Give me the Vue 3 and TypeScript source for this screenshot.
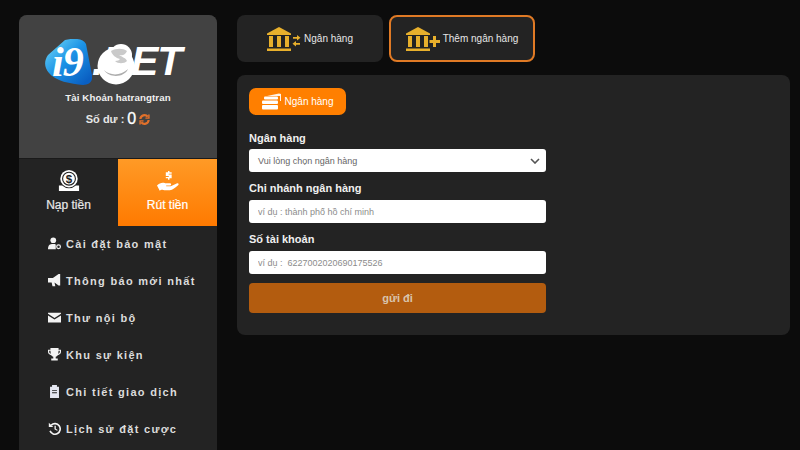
<script setup lang="ts">
const menu = [
  { label: 'Cài đặt bảo mật', icon: 'user' },
  { label: 'Thông báo mới nhất', icon: 'horn' },
  { label: 'Thư nội bộ', icon: 'mail' },
  { label: 'Khu sự kiện', icon: 'cup' },
  { label: 'Chi tiết giao dịch', icon: 'clip' },
  { label: 'Lịch sử đặt cược', icon: 'hist' },
]
</script>

<template>
  <div class="page">
    <aside class="side">
      <div class="profile">
        <div class="logo">
          <div class="badge">
            <svg viewBox="0 0 47 46" width="47" height="46">
              <defs>
                <linearGradient id="bg" x1="0.1" y1="0.1" x2="0.9" y2="0.9">
                  <stop offset="0" stop-color="#63cdf5" />
                  <stop offset="0.45" stop-color="#1c93e6" />
                  <stop offset="1" stop-color="#0a5fc2" />
                </linearGradient>
              </defs>
              <path d="M20 1C28-1 38-1 41 5L47 36C48 43 44 46 38 46C26 45 10 42 4 34C-1 28-1 22 3 16Z" fill="url(#bg)" />
            </svg>
            <span>i9</span>
          </div>
          <span class="word">.BET</span>
          <svg class="blob" viewBox="0 0 40 42" width="40" height="42">
            <circle cx="19" cy="23" r="18.500" fill="#fff" />
            <circle cx="24" cy="12" r="11" fill="#fff" />
            <path d="M14 8c5-3 12-3 16 0-2 4-4 5-8 4 3 2 7 3 8 6-3 3-9 3-12 0 3 0 4-1 5-2-4-1-8-4-9-8z" fill="#8a8a8a" opacity=".45" />
            <path d="M7 27c6 6 17 6 24-1-3 8-18 10-24 1z" fill="#6a6a6a" opacity=".55" />
          </svg>
        </div>
        <div class="acct">Tài Khoản hatrangtran</div>
        <div class="bal">
          Số dư : <b>0</b>
          <svg viewBox="0 0 12 12" width="11" height="11" fill="none" stroke="#e2702a" stroke-width="2.400">
            <path d="M1.500 5.500a4.500 4.500 0 0 1 8-2.500M10.500 6.500a4.500 4.500 0 0 1-8 2.500" />
            <path d="M10.800 .5v4H7M1.200 11.500v-4H5" stroke-width="1.600" />
          </svg>
        </div>
      </div>
      <div class="actions">
        <div class="act">
          <svg viewBox="0 0 24 24" width="22" height="22">
            <circle cx="12" cy="9.500" r="9.500" fill="#fff" />
            <circle cx="12" cy="9.500" r="7" fill="none" stroke="#232323" stroke-width="1.200" />
            <text x="12" y="14" text-anchor="middle" font-size="12.500" font-weight="700" font-family="Liberation Sans" fill="#232323">$</text>
            <path d="M1 17h3.500a11 11 0 0 0 15 0H23v6H1z" fill="#fff" />
          </svg>
          <span>Nạp tiền</span>
        </div>
        <div class="act on">
          <svg viewBox="0 0 26 24" width="24" height="22" fill="#fff">
            <path d="M1 17c3-3 6-3.500 9-2.500h5c2 0 2 2.500 0 2.500h-4v.8h5l7-3.300c1.500-.4 2.300 1 1 2-3 2.500-6 5-9 5.500H9c-3 0-3-1-5 .5z" />
            <path d="M13 1h1.600v1.500h2.400v1.500h-3.200v1h3.200v4h-2.400v1.500H13V9h-2.400V7.500h3.200v-1h-3.200v-4H13z" />
          </svg>
          <span>Rút tiền</span>
        </div>
      </div>
      <ul class="menu">
        <li v-for="m in menu" :key="m.label">
          <svg viewBox="0 0 16 16" width="15" height="13" fill="#f2f2f2">
            <template v-if="m.icon === 'user'">
              <circle cx="6.500" cy="4" r="3.500" />
              <path d="M0 15c0-5 2-6.500 6.500-6.500 1.500 0 2.500.2 3 .6V15z" />
              <circle cx="13" cy="12" r="2.300" fill="none" stroke="#f2f2f2" stroke-width="1.500" />
            </template>
            <path v-else-if="m.icon === 'horn'" d="M0 5h6l7-5h2v14h-2L8 10.500l1 4.500H5.500L4.500 10.500H0z" />
            <template v-else-if="m.icon === 'mail'">
              <path d="M0 2h16v1.500L8 8.500 0 3.500z" />
              <path d="M0 5.500l8 5 8-5V14H0z" />
            </template>
            <path v-else-if="m.icon === 'cup'" d="M3 0h10v2h3v3c0 2-2 3.500-4 4-.6 1-1.500 1.500-2.500 1.800V13H12v2.500H4V13h2.500v-2.200C5.500 10.500 4.600 10 4 9 2 8.500 0 7 0 5V2h3zM1.500 3.500V5c0 1 .8 1.800 1.900 2.200L3 3.500zM14.500 3.500H13l-.4 3.700c1.100-.4 1.900-1.200 1.900-2.200z" />
            <path v-else-if="m.icon === 'clip'" d="M2.500 2H5V0h6v2h2.500v14h-11zM5 6v1h6V6zM5 9v1h6V9z" fill="#e4e6f0" />
            <template v-else>
              <path d="M4 3.800A6.500 6.500 0 1 1 2.500 11" fill="none" stroke="#f2f2f2" stroke-width="2" />
              <path d="M1 1l5.500 5H1z" />
              <path d="M8 4.500h1.600v3.700l2.400 1.500-.8 1.200L8 9z" />
            </template>
          </svg>
          <span>{{ m.label }}</span>
        </li>
      </ul>
    </aside>

    <main class="main">
      <div class="tabs">
        <div class="tab">
          <svg viewBox="0 0 34 26" width="34" height="26" fill="#e8b02c">
            <path d="M12 1l12 6.500v1.500H0V7.500z" />
            <path d="M2 10h4v11H2zM10 10h4v11h-4zM18 10h4v11h-4zM0 22.500h24V25H0z" />
            <path d="M26 11h4V9l3.500 2.800-3.500 2.700v-1.800h-4zM33 17h-4v-2l-3.500 2.800L29 20.500v-1.800h4z" />
          </svg>
          <span>Ngân hàng</span>
        </div>
        <div class="tab active">
          <svg viewBox="0 0 34 26" width="34" height="26" fill="#e8b02c">
            <path d="M12 1l12 6.500v1.500H0V7.500z" />
            <path d="M2 10h4v11H2zM10 10h4v11h-4zM18 10h4v11h-4zM0 22.500h24V25H0z" />
            <path d="M27 10h3v4h4v3h-4v4h-3v-4h-3.500v-3H27z" />
          </svg>
          <span>Thêm ngân hàng</span>
        </div>
      </div>
      <section class="panel">
        <div class="pill">
          <svg viewBox="0 0 20 17" width="20" height="17" fill="#fff">
            <path d="M5 3l12-2.500 2 .5v7h-1V3z" opacity=".9" />
            <rect x="2" y="3.500" width="14" height="3" rx="1" />
            <rect x="0" y="7.500" width="16" height="3.500" rx="1" />
            <rect x="0" y="12" width="16" height="4.500" rx="1" />
          </svg>
          <span>Ngân hàng</span>
        </div>
        <form class="form" @submit.prevent>
          <label class="first">Ngân hàng</label>
          <div class="field sel">
            <span>Vui lòng chọn ngân hàng</span>
            <svg viewBox="0 0 10 6" width="10" height="6" fill="none" stroke="#555" stroke-width="1.600">
              <path d="M1 1l4 4 4-4" />
            </svg>
          </div>
          <label>Chi nhánh ngân hàng</label>
          <input class="field" placeholder="ví dụ : thành phố hồ chí minh" />
          <label>Số tài khoản</label>
          <input class="field" placeholder="ví dụ :  6227002020690175526" />
          <button class="send" type="button">gửi đi</button>
        </form>
      </section>
    </main>
  </div>
</template>

<style>
html, body { margin: 0; background: #0c0c0c; overflow: hidden; }
</style>

<style scoped>
.page {
  width: 800px;
  height: 450px;
  overflow: hidden;
  display: flex;
  gap: 20px;
  box-sizing: border-box;
  padding: 15px 10px 0 19px;
  background: #0c0c0c;
  font-family: "Liberation Sans", Arial, sans-serif;
  color: #fff;
}
.side {
  width: 198px;
  flex: none;
  height: 520px;
  border-radius: 8px 8px 0 0;
  background: #232323;
  overflow: hidden;
}
.profile {
  height: 143px;
  background: #424242;
  display: flex;
  flex-direction: column;
  align-items: center;
  box-sizing: border-box;
  padding-top: 24px;
}
.logo {
  position: relative;
  width: 146px;
  height: 46px;
  display: flex;
}
.badge {
  position: relative;
  width: 47px;
  height: 46px;
  flex: none;
}
.badge svg { display: block; }
.badge span {
  position: absolute;
  left: 7px;
  top: 4px;
  font: italic bold 42px "Liberation Serif", serif;
  line-height: 38px;
  color: #fff;
  letter-spacing: -1px;
}
.word {
  font: italic 900 41px "Liberation Sans", sans-serif;
  line-height: 41px;
  letter-spacing: -1px;
  margin-top: 2px;
}
.blob {
  position: absolute;
  left: 52px;
  top: 4px;
}
.acct {
  margin-top: 6px;
  font-size: 9.700px;
  font-weight: 700;
  line-height: 13px;
  color: #f0f0f0;
  letter-spacing: .1px;
}
.bal {
  margin-top: 6px;
  font-size: 11px;
  font-weight: 700;
  color: #e6e6e6;
  display: flex;
  align-items: center;
  gap: 3px;
  line-height: 18px;
}
.bal b {
  font-size: 16px;
  font-weight: 400;
  color: #fff;
  -webkit-text-stroke: .3px #fff;
}
.actions {
  display: flex;
  height: 68px;
  box-sizing: border-box;
  border-top: 1px solid #1a1a1a;
}
.act {
  flex: 1;
  display: flex;
  flex-direction: column;
  align-items: center;
  padding-top: 11px;
  box-sizing: border-box;
  font-size: 12px;
  gap: 6px;
  color: #e8e8e8;
  -webkit-text-stroke: .2px currentColor;
}
.act.on {
  background: linear-gradient(#ff9a26, #ff7a00);
  color: #fff;
}
.menu {
  list-style: none;
  margin: -1px 0 0;
  padding: 0 0 0 28px;
}
.menu li {
  height: 37px;
  display: flex;
  align-items: center;
  gap: 4px;
  font-size: 11px;
  font-weight: 700;
  letter-spacing: 1.300px;
  color: #dcdcdc;
}
.main {
  flex: 1;
  display: flex;
  flex-direction: column;
  gap: 13px;
}
.tabs {
  display: flex;
  gap: 6px;
}
.tab {
  width: 146px;
  height: 47px;
  box-sizing: border-box;
  background: #232323;
  border-radius: 8px;
  display: flex;
  align-items: center;
  justify-content: center;
  gap: 3px;
  font-size: 10px;
  color: #e6e6e6;
}
.tab.active {
  border: 2px solid #e07a25;
}
.panel {
  height: 260px;
  box-sizing: border-box;
  background: #232323;
  border-radius: 8px;
  padding: 13px 12px;
}
.pill {
  width: 97px;
  height: 27px;
  background: #ff7f00;
  border-radius: 7px;
  display: flex;
  align-items: center;
  justify-content: center;
  gap: 3px;
  font-size: 10px;
  color: #fff;
}
.form {
  width: 297px;
  margin-top: 17px;
  display: flex;
  flex-direction: column;
}
label {
  font-size: 11px;
  font-weight: 700;
  line-height: 13px;
  color: #f0f0f0;
  margin-bottom: 5px;
}
label.first { margin-bottom: 4px; }
.field {
  height: 23px;
  box-sizing: border-box;
  background: #fff;
  border: 0;
  border-radius: 3px;
  padding: 0 9px;
  font-family: inherit;
  font-size: 9px;
  margin-bottom: 10px;
  outline: none;
}
.field::placeholder { color: #8c8c8c; opacity: 1; }
.sel {
  display: flex;
  align-items: center;
  justify-content: space-between;
  color: #666;
  padding-right: 6px;
}
.send {
  height: 30px;
  margin-top: -1px;
  border: 0;
  border-radius: 4px;
  background: #b35c0f;
  color: #d9c4ad;
  font-family: inherit;
  font-size: 11px;
  font-weight: 700;
}
</style>
